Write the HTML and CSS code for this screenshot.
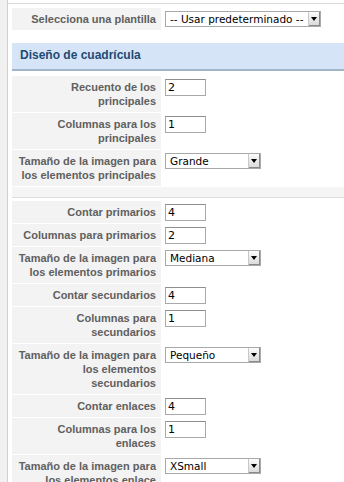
FILE: index.html
```html
<!DOCTYPE html>
<html lang="es">
<head>
    <meta charset="UTF-8">
    <meta name="viewport" content="width=device-width, initial-scale=1.0">
    <title>Parámetros</title>
    <link rel="stylesheet" href="styles.css">
</head>
<body>
    <div class="frame">
        <div class="panel">
            <!-- Plantilla -->
            <table class="paramlist">
                <colgroup><col class="key-col"><col></colgroup>
                <tr>
                    <td class="key">Selecciona una plantilla</td>
                    <td class="value">
                        <span class="select"><select class="wide"><option>-- Usar predeterminado --</option></select></span>
                    </td>
                </tr>
            </table>

            <h3 class="pane-title">Diseño de cuadrícula</h3>

            <!-- Principales -->
            <table class="paramlist">
                <colgroup><col class="key-col"><col></colgroup>
                <tr>
                    <td class="key">Recuento de los principales</td>
                    <td class="value"><input type="text" class="inputbox" value="2"></td>
                </tr>
                <tr>
                    <td class="key">Columnas para los principales</td>
                    <td class="value"><input type="text" class="inputbox" value="1"></td>
                </tr>
                <tr>
                    <td class="key">Tamaño de la imagen para los elementos principales</td>
                    <td class="value">
                        <span class="select"><select><option>Grande</option></select></span>
                    </td>
                </tr>
            </table>

            <div class="pane-gap"></div>

            <!-- Primarios, secundarios, enlaces -->
            <table class="paramlist">
                <colgroup><col class="key-col"><col></colgroup>
                <tr>
                    <td class="key">Contar primarios</td>
                    <td class="value"><input type="text" class="inputbox" value="4"></td>
                </tr>
                <tr>
                    <td class="key">Columnas para primarios</td>
                    <td class="value"><input type="text" class="inputbox" value="2"></td>
                </tr>
                <tr>
                    <td class="key">Tamaño de la imagen para los elementos primarios</td>
                    <td class="value">
                        <span class="select"><select><option>Mediana</option></select></span>
                    </td>
                </tr>
                <tr>
                    <td class="key">Contar secundarios</td>
                    <td class="value"><input type="text" class="inputbox" value="4"></td>
                </tr>
                <tr>
                    <td class="key">Columnas para secundarios</td>
                    <td class="value"><input type="text" class="inputbox" value="1"></td>
                </tr>
                <tr>
                    <td class="key">Tamaño de la imagen para los elementos secundarios</td>
                    <td class="value">
                        <span class="select"><select><option>Pequeño</option></select></span>
                    </td>
                </tr>
                <tr>
                    <td class="key">Contar enlaces</td>
                    <td class="value"><input type="text" class="inputbox" value="4"></td>
                </tr>
                <tr>
                    <td class="key">Columnas para los enlaces</td>
                    <td class="value"><input type="text" class="inputbox" value="1"></td>
                </tr>
                <tr>
                    <td class="key">Tamaño de la imagen para los elementos enlace</td>
                    <td class="value">
                        <span class="select"><select><option>XSmall</option></select></span>
                    </td>
                </tr>
            </table>
        </div>
    </div>
</body>
</html>
```

FILE: styles.css
```css
html, body {
    margin: 0;
    overflow: hidden;
}
body {
    background-color: #f1f1f1;
    font-family: "Liberation Sans", Arial, sans-serif;
    font-size: 11px;
}
.frame {
    margin-left: 7px;
    border-left: 1px solid #cfcfcf;
    background: #fff;
    padding-top: 3px;
    height: 479px;
}
.panel {
    border-top: 1px solid #dcdcdc;
    padding: 3px 0 0 3px;
}
.paramlist {
    border-collapse: separate;
    border-spacing: 1px;
    table-layout: fixed;
    width: 100%;
}
.key-col {
    width: 149px;
}
.paramlist td {
    vertical-align: top;
}
.key {
    padding: 4px 5px 4px 4px;
    background-color: #f3f3f3;
    color: #606060;
    font-weight: bold;
    text-align: right;
    line-height: 14px;
}
.value {
    padding: 3px 3px 2px 3px;
}
.pane-title {
    margin: 12px 0 4px 1px;
    padding: 5px 8px 7px;
    background-color: #d5e5f7;
    border-bottom: 2px solid #a1b5ca;
    color: #1f4a74;
    font-size: 12px;
    line-height: 14px;
    font-weight: bold;
}
.pane-gap {
    margin: 0 0 2px 1px;
    height: 10px;
    background-color: #f5f5f5;
    border-bottom: 1px solid #dedede;
}
.inputbox {
    box-sizing: border-box;
    width: 41px;
    height: 17px;
    margin: 0;
    padding: 0 2px;
    border: 1px solid #aaa;
    border-top-color: #8e8e8e;
    font-family: "DejaVu Sans", sans-serif;
    font-size: 11px;
    color: #000;
    vertical-align: top;
}
.select {
    position: relative;
    display: inline-block;
    vertical-align: top;
}
.select select {
    -webkit-appearance: none;
    appearance: none;
    box-sizing: border-box;
    width: 96px;
    height: 16px;
    margin: 0;
    padding: 0 14px 0 4px;
    border: 1px solid #a9a9a9;
    border-radius: 0;
    background: #fff;
    font-family: "DejaVu Sans", sans-serif;
    font-size: 10.5px;
    color: #000;
    display: block;
}
.select select.wide {
    width: 156px;
}
.select::before {
    content: "";
    position: absolute;
    top: 1px;
    right: 1px;
    bottom: 1px;
    width: 11px;
    background: linear-gradient(#fcfcfc, #d9d9d9);
    border-left: 1px solid #c9c9c9;
    box-shadow: inset -1px -1px 0 #8a8a8a;
}
.select::after {
    content: "";
    position: absolute;
    top: 6px;
    right: 4px;
    border-left: 3px solid transparent;
    border-right: 3px solid transparent;
    border-top: 4px solid #000;
}
```
